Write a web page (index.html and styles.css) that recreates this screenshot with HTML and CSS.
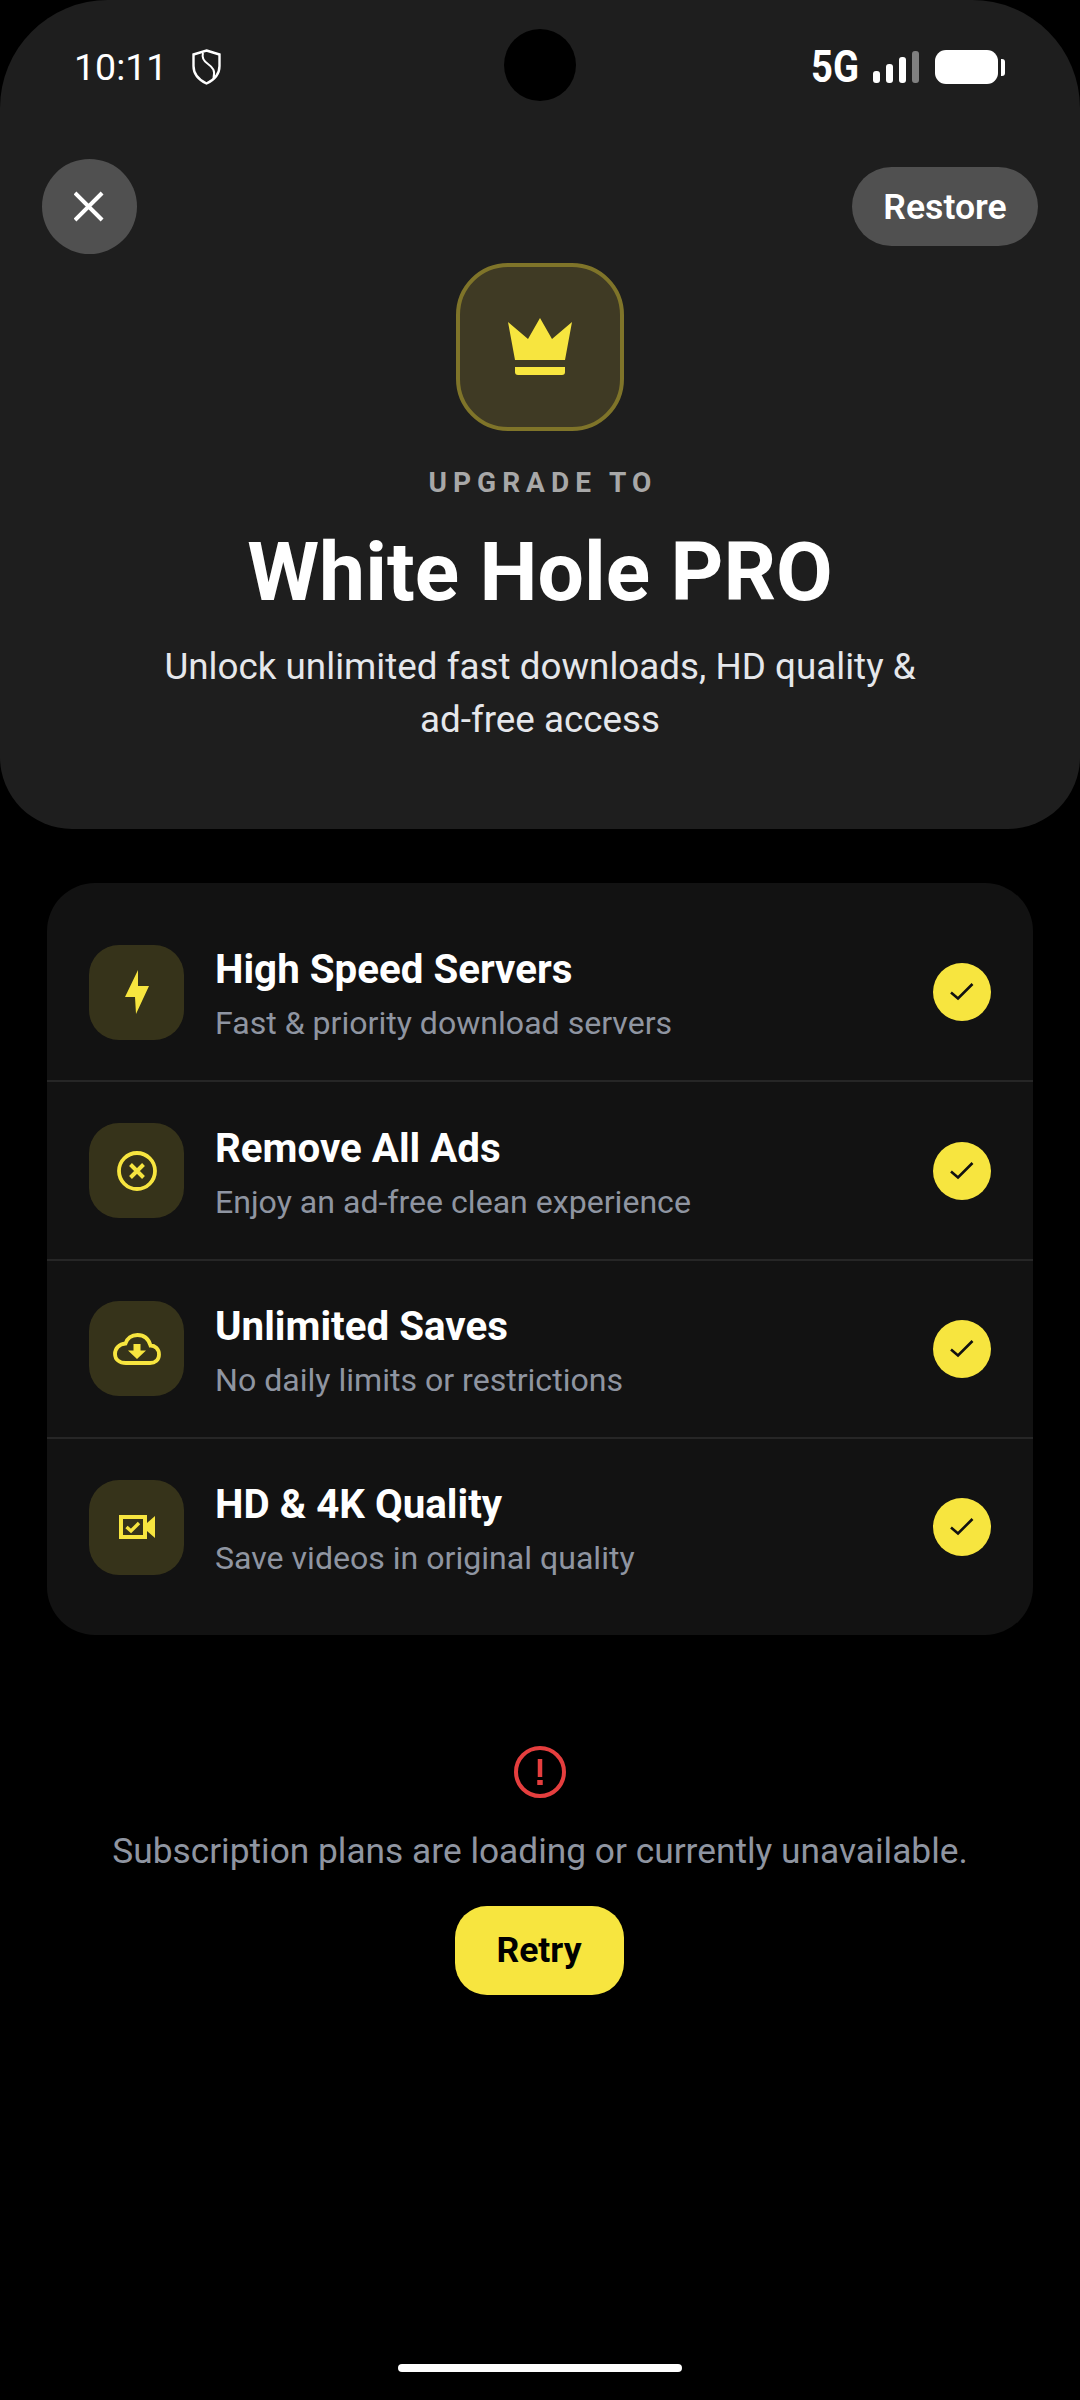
FILE: index.html
```html
<!DOCTYPE html>
<html lang="en">
<head>
  <meta charset="UTF-8">
  <meta name="viewport" content="width=device-width, initial-scale=1.0">
  <title>White Hole PRO</title>
  <link rel="stylesheet" href="styles.css">
</head>
<body>
  <header class="hero">
    <div class="status-bar">
      <div class="status-left">
        <span class="clock">10:11</span>
        <svg class="shield" viewBox="0 0 29 36" fill="none" stroke="#fff" stroke-width="2.4"><path d="M14.5 1.5 27.5 5.5V17C27.5 25 22 31 14.5 34.5 7 31 1.5 25 1.5 17V5.5Z"/><path d="M11 4C9.500 9 11.500 12 16 15 21 18.500 23.500 22 21.500 29" stroke-width="2"/></svg>
      </div>
      <div class="camera"></div>
      <div class="status-right">
        <span class="network">5G</span>
        <div class="signal">
          <i class="bar bar-1"></i><i class="bar bar-2"></i><i class="bar bar-3"></i><i class="bar bar-4"></i>
        </div>
        <div class="battery"><div class="battery-body"></div><div class="battery-nub"></div></div>
      </div>
    </div>

    <div class="top-actions">
      <button class="close-btn">
        <svg viewBox="0 0 32 32" width="31" height="31" stroke="#fff" stroke-width="4.200"><path d="M1 2 29 30M29 2 1 30"/></svg>
      </button>
      <button class="restore-btn">Restore</button>
    </div>

    <div class="crown-box">
      <svg viewBox="0 0 64 58" width="64" height="58" fill="#f7e53f"><path d="M0 4 20 21 32 0 44 21 64 4 57 42H7Z"/><path d="M7 49H57V54Q57 57 54 57H10Q7 57 7 54Z"/></svg>
    </div>
    <div class="eyebrow">UPGRADE TO</div>
    <h1>White Hole PRO</h1>
    <p class="tagline">Unlock unlimited fast downloads, HD quality &amp;<br>ad-free access</p>
  </header>

  <section class="features">
    <div class="row">
      <div class="row-icon">
        <svg viewBox="0 0 24 44" width="24" height="44" fill="#f7e53f"><path d="M13 0 0 27H10L11 44 24 16H13Z"/></svg>
      </div>
      <div class="row-text">
        <div class="row-title">High Speed Servers</div>
        <div class="row-sub">Fast &amp; priority download servers</div>
      </div>
      <div class="tick"><svg viewBox="0 0 24 18" width="24" height="18" fill="none" stroke="#111" stroke-width="2.600"><path d="M1 9.500 8 15.500 22.500 1"/></svg></div>
    </div>
    <div class="row">
      <div class="row-icon">
        <svg viewBox="0 0 40 40" width="40" height="40" fill="none" stroke="#f7e53f"><circle cx="20" cy="20" r="18" stroke-width="3.800"/><path d="M13.500 13.500 26.500 26.500M26.500 13.500 13.500 26.500" stroke-width="4"/></svg>
      </div>
      <div class="row-text">
        <div class="row-title">Remove All Ads</div>
        <div class="row-sub">Enjoy an ad-free clean experience</div>
      </div>
      <div class="tick"><svg viewBox="0 0 24 18" width="24" height="18" fill="none" stroke="#111" stroke-width="2.600"><path d="M1 9.500 8 15.500 22.500 1"/></svg></div>
    </div>
    <div class="row">
      <div class="row-icon">
        <svg viewBox="0 0 48 32" width="48" height="32" fill="none"><path d="M13 30H37C42 30 46 27 46 21.500 46 16 42 12.500 37.500 12.500 35.500 5.500 30.500 2 24.500 2 18.500 2 14 5.500 12.500 10.500 6 11 2 15.500 2 21 2 26.500 6.500 30 13 30Z" stroke="#f7e53f" stroke-width="3.800"/><path d="M20.500 11H27.500V17.500H33L24 26 15 17.500H20.500Z" fill="#f7e53f"/></svg>
      </div>
      <div class="row-text">
        <div class="row-title">Unlimited Saves</div>
        <div class="row-sub">No daily limits or restrictions</div>
      </div>
      <div class="tick"><svg viewBox="0 0 24 18" width="24" height="18" fill="none" stroke="#111" stroke-width="2.600"><path d="M1 9.500 8 15.500 22.500 1"/></svg></div>
    </div>
    <div class="row">
      <div class="row-icon">
        <svg viewBox="0 0 36 24" width="36" height="24"><path d="M0 0H28V24H0ZM4 4V20H24V4Z" fill="#f7e53f" fill-rule="evenodd"/><path d="M28 8 36 1V23L28 16Z" fill="#f7e53f"/><path d="M7.500 12 12 16 20 8" fill="none" stroke="#f7e53f" stroke-width="3.400"/></svg>
      </div>
      <div class="row-text">
        <div class="row-title">HD &amp; 4K Quality</div>
        <div class="row-sub">Save videos in original quality</div>
      </div>
      <div class="tick"><svg viewBox="0 0 24 18" width="24" height="18" fill="none" stroke="#111" stroke-width="2.600"><path d="M1 9.500 8 15.500 22.500 1"/></svg></div>
    </div>
  </section>

  <section class="plans-error">
    <svg viewBox="0 0 52 52" width="52" height="52" fill="none" stroke="#e53e3e"><circle cx="26" cy="26" r="24" stroke-width="4"/><path d="M26 13V31" stroke-width="4.500"/><path d="M26 34V39" stroke-width="5.500"/></svg>
    <p class="error-text">Subscription plans are loading or currently unavailable.</p>
    <button class="retry-btn">Retry</button>
  </section>

  <div class="home-bar"></div>
</body>
</html>
```

FILE: styles.css
```css
* {
  box-sizing: border-box;
}
body {
  margin: 0;
  width: 1080px;
  height: 2400px;
  background: #000000;
  color: #ffffff;
  font-family: Roboto, "Liberation Sans", sans-serif;
  position: relative;
  overflow: hidden;
}
button {
  font-family: inherit;
  border: none;
  padding: 0;
}

/* top panel */
.hero {
  height: 829px;
  background: #1e1e1e;
  border-radius: 108px 108px 72px 72px;
  text-align: center;
  padding-top: 49px;
}
.status-bar {
  height: 36px;
  padding: 0 75px 0 74px;
  display: flex;
  justify-content: space-between;
  align-items: center;
}
.status-left {
  display: flex;
  align-items: center;
  gap: 25px;
}
.clock {
  font-size: 37.500px;
  line-height: 36px;
}
.shield {
  width: 29px;
  height: 36px;
}
.camera {
  position: absolute;
  left: 504px;
  top: 29px;
  width: 72px;
  height: 72px;
  border-radius: 50%;
  background: #000000;
}
.status-right {
  display: flex;
  align-items: center;
  gap: 16px;
}
.network {
  display: inline-block;
  width: 46px;
  font-size: 45px;
  font-weight: 700;
  line-height: 36px;
  text-align: left;
  white-space: nowrap;
  transform: scaleX(0.85);
  transform-origin: left center;
}
.signal {
  display: flex;
  align-items: flex-end;
  gap: 6px;
  height: 32px;
}
.bar {
  width: 7px;
  border-radius: 3px;
  background: #ffffff;
}
.bar-1 { height: 12px; }
.bar-2 { height: 19px; }
.bar-3 { height: 26px; }
.bar-4 { height: 32px; background: #808080; }
.battery {
  display: flex;
  align-items: center;
  gap: 3px;
}
.battery-body {
  width: 63px;
  height: 34px;
  border-radius: 11px;
  background: #ffffff;
}
.battery-nub {
  width: 4px;
  height: 17px;
  border-radius: 0 3px 3px 0;
  background: #ffffff;
}

.top-actions {
  display: flex;
  justify-content: space-between;
  align-items: center;
  padding: 0 42px;
  margin-top: 74px;
}
.close-btn {
  width: 95px;
  height: 95px;
  border-radius: 50%;
  background: #505050;
  display: flex;
  align-items: center;
  justify-content: center;
}
.restore-btn {
  width: 186px;
  height: 79px;
  border-radius: 40px;
  background: #505050;
  color: #ffffff;
  font-size: 35.600px;
  font-weight: 600;
}
.crown-box {
  width: 168px;
  height: 168px;
  margin: 9px auto 0;
  border: 4px solid #7f7429;
  border-radius: 52px;
  background: #3f3a24;
  display: flex;
  align-items: center;
  justify-content: center;
}
.eyebrow {
  margin-top: 36px;
  padding-left: 6px;
  font-size: 28px;
  font-weight: 700;
  line-height: 32px;
  letter-spacing: 6px;
  color: #a8a8a8;
}
h1 {
  margin: 26px 0 0;
  font-size: 82.200px;
  font-weight: 700;
  line-height: 94px;
}
.tagline {
  margin: 21px 0 0;
  font-size: 36.800px;
  line-height: 53px;
  color: #e5e7eb;
}

/* feature list */
.features {
  margin: 54px 47px 0;
  padding: 21px 0 19px;
  background: #121212;
  border-radius: 48px;
}
.row {
  height: 178.400px;
  padding: 0 42px;
  display: flex;
  align-items: center;
  border-bottom: 2px solid #262626;
}
.row:last-child {
  border-bottom: none;
  height: 176.400px;
}
.row-icon {
  width: 95px;
  height: 95px;
  border-radius: 30px;
  background: #36331a;
  display: flex;
  align-items: center;
  justify-content: center;
  flex-shrink: 0;
}
.row-text {
  flex: 1;
  margin-left: 31px;
  padding-top: 4px;
}
.row-title {
  font-size: 40.300px;
  font-weight: 700;
  line-height: 48px;
}
.row-sub {
  margin-top: 10px;
  font-size: 32.100px;
  line-height: 38px;
  color: #8f95a1;
}
.tick {
  width: 58px;
  height: 58px;
  border-radius: 50%;
  background: #f7e53f;
  display: flex;
  align-items: center;
  justify-content: center;
}

/* loading error */
.plans-error {
  margin-top: 111px;
  display: flex;
  flex-direction: column;
  align-items: center;
}
.error-text {
  margin: 31px 0 0;
  font-size: 35.300px;
  line-height: 44px;
  color: #8f95a1;
}
.retry-btn {
  margin: 33px 2px 0 0;
  width: 169px;
  height: 89px;
  border-radius: 32px;
  background: #f7e53f;
  color: #000000;
  font-size: 35.500px;
  font-weight: 700;
}

.home-bar {
  position: absolute;
  left: 398px;
  top: 2364px;
  width: 284px;
  height: 8px;
  border-radius: 4px;
  background: #ffffff;
}
```
